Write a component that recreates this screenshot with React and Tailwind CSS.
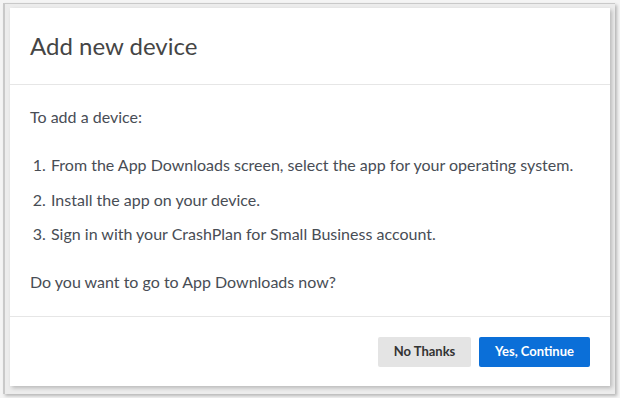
import React from "react";

export default function App() {
  const steps = [
    "From the App Downloads screen, select the app for your operating system.",
    "Install the app on your device.",
    "Sign in with your CrashPlan for Small Business account.",
  ];

  return (
    <div
      className="w-[620px] h-[398px] bg-[#f4f4f4] pt-[3px] pl-[3px] overflow-hidden"
      style={{ fontFamily: "Lato, 'Open Sans', sans-serif" }}
    >
      <div className="w-[612px] h-[391px] border-l-2 border-t border-[#c9c9c9] bg-[#ececec] pl-[5px] pt-[4px] shadow-[2px_2px_3px_rgba(0,0,0,0.25)]">
        <div className="w-[600px] h-[378px] bg-white flex flex-col shadow-[2px_2px_4px_rgba(0,0,0,0.22)]">
          <div className="h-[77px] border-b border-[#e6e6e6] flex items-center px-[20px] shrink-0">
            <h1 className="text-[24px] text-[#454545]">Add new device</h1>
          </div>

          <div className="flex-1 px-[20px] pt-[22px] text-[16px] leading-[20px] text-[#484d55]">
            <p>To add a device:</p>
            <ol className="list-decimal pl-[20px] mt-[28px] flex flex-col gap-[14.5px]">
              {steps.map((s) => (
                <li key={s} className="pl-[1px]">{s}</li>
              ))}
            </ol>
            <p className="mt-[28px]">Do you want to go to App Downloads now?</p>
          </div>

          <div className="h-[70px] border-t border-[#e6e6e6] flex items-start justify-end gap-[8px] pt-[20px] pr-[20px] shrink-0">
            <button className="h-[30px] w-[93px] rounded-[2px] bg-[#e4e4e4] text-[13px] font-bold text-[#333]">
              No Thanks
            </button>
            <button className="h-[30px] w-[111px] rounded-[2px] bg-[#0b6fd8] text-[13px] font-bold text-white">
              Yes, Continue
            </button>
          </div>
        </div>
      </div>
    </div>
  );
}
